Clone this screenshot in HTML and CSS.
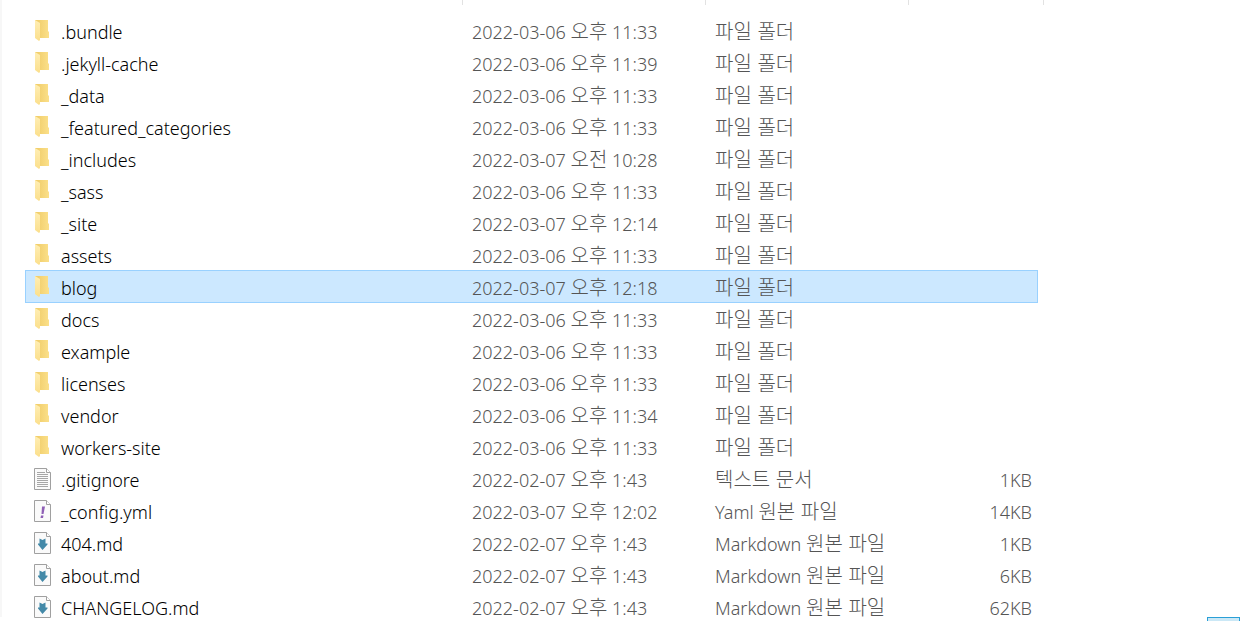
FILE: index.html
```html
<!DOCTYPE html>
<html lang="ko">
<head>
<meta charset="utf-8">
<title>blog</title>
<link rel="stylesheet" href="styles.css">
</head>
<body>
<svg class="defs" aria-hidden="true">
  <defs>
    <linearGradient id="back" x1="0" x2="1"><stop offset="0" stop-color="#efca65"/><stop offset="1" stop-color="#fbe08a"/></linearGradient>
    <linearGradient id="flap" x1="0" x2="0" y1="0" y2="1"><stop offset="0" stop-color="#ffeeb4"/><stop offset="1" stop-color="#fbdf8c"/></linearGradient>
  </defs>
  <symbol id="folder" viewBox="0 0 18 22">
    <path d="M1 0H14V11L15 12V18H1Z" fill="url(#back)"/>
    <path d="M1 0L6 3V20L5 21L1 18Z" fill="url(#flap)"/>
  </symbol>
  <symbol id="page" viewBox="0 0 18 22">
    <path d="M.5 .5H12.5L16.500 4.500V21.500H.5Z" fill="#fafafa" stroke="#a0a0a0"/>
    <path d="M12.500 .5V4.500H16.500" fill="#fff" stroke="#a0a0a0"/>
  </symbol>
  <symbol id="text" viewBox="0 0 18 22">
    <use href="#page"/>
    <path d="M3 4.500H11M3 6.500H14M3 8.500H14M3 10.500H14M3 12.500H14M3 14.500H14M3 16.500H14M3 18.500H14" stroke="#a6a6a6"/>
  </symbol>
  <symbol id="yaml" viewBox="0 0 18 22">
    <use href="#page"/>
    <path d="M8 6.500H11L9.500 14H7.500ZM7 15.500H9.500L9 18H6.500Z" fill="#8e5fb5"/>
  </symbol>
  <symbol id="markdown" viewBox="0 0 18 22">
    <use href="#page"/>
    <path d="M5.500 6.500L8.500 8L11.500 6.500V11.500H13.500V12.500L8.500 18L4 12.500V11.500H5.500Z" fill="#4389a8"/>
  </symbol>
</svg>
<main class="explorer">
  <table class="files">
    <thead><tr class="columns"><th></th><th></th><th></th><th></th></tr></thead>
    <tbody>
      <tr class="row"><td class="name"><svg class="icon"><use href="#folder"/></svg>.bundle</td><td>2022-03-06 <span class="ko">오후</span> 11:33</td><td><span class="ko">파일 폴더</span></td><td class="size"></td></tr>
      <tr class="row"><td class="name"><svg class="icon"><use href="#folder"/></svg>.jekyll-cache</td><td>2022-03-06 <span class="ko">오후</span> 11:39</td><td><span class="ko">파일 폴더</span></td><td class="size"></td></tr>
      <tr class="row"><td class="name"><svg class="icon"><use href="#folder"/></svg>_data</td><td>2022-03-06 <span class="ko">오후</span> 11:33</td><td><span class="ko">파일 폴더</span></td><td class="size"></td></tr>
      <tr class="row"><td class="name"><svg class="icon"><use href="#folder"/></svg>_featured_categories</td><td>2022-03-06 <span class="ko">오후</span> 11:33</td><td><span class="ko">파일 폴더</span></td><td class="size"></td></tr>
      <tr class="row"><td class="name"><svg class="icon"><use href="#folder"/></svg>_includes</td><td>2022-03-07 <span class="ko">오전</span> 10:28</td><td><span class="ko">파일 폴더</span></td><td class="size"></td></tr>
      <tr class="row"><td class="name"><svg class="icon"><use href="#folder"/></svg>_sass</td><td>2022-03-06 <span class="ko">오후</span> 11:33</td><td><span class="ko">파일 폴더</span></td><td class="size"></td></tr>
      <tr class="row"><td class="name"><svg class="icon"><use href="#folder"/></svg>_site</td><td>2022-03-07 <span class="ko">오후</span> 12:14</td><td><span class="ko">파일 폴더</span></td><td class="size"></td></tr>
      <tr class="row"><td class="name"><svg class="icon"><use href="#folder"/></svg>assets</td><td>2022-03-06 <span class="ko">오후</span> 11:33</td><td><span class="ko">파일 폴더</span></td><td class="size"></td></tr>
      <tr class="row selected"><td class="name"><svg class="icon"><use href="#folder"/></svg>blog</td><td>2022-03-07 <span class="ko">오후</span> 12:18</td><td><span class="ko">파일 폴더</span></td><td class="size"></td></tr>
      <tr class="row"><td class="name"><svg class="icon"><use href="#folder"/></svg>docs</td><td>2022-03-06 <span class="ko">오후</span> 11:33</td><td><span class="ko">파일 폴더</span></td><td class="size"></td></tr>
      <tr class="row"><td class="name"><svg class="icon"><use href="#folder"/></svg>example</td><td>2022-03-06 <span class="ko">오후</span> 11:33</td><td><span class="ko">파일 폴더</span></td><td class="size"></td></tr>
      <tr class="row"><td class="name"><svg class="icon"><use href="#folder"/></svg>licenses</td><td>2022-03-06 <span class="ko">오후</span> 11:33</td><td><span class="ko">파일 폴더</span></td><td class="size"></td></tr>
      <tr class="row"><td class="name"><svg class="icon"><use href="#folder"/></svg>vendor</td><td>2022-03-06 <span class="ko">오후</span> 11:34</td><td><span class="ko">파일 폴더</span></td><td class="size"></td></tr>
      <tr class="row"><td class="name"><svg class="icon"><use href="#folder"/></svg>workers-site</td><td>2022-03-06 <span class="ko">오후</span> 11:33</td><td><span class="ko">파일 폴더</span></td><td class="size"></td></tr>
      <tr class="row"><td class="name"><svg class="icon"><use href="#text"/></svg>.gitignore</td><td>2022-02-07 <span class="ko">오후</span> 1:43</td><td><span class="ko">텍스트 문서</span></td><td class="size">1KB</td></tr>
      <tr class="row"><td class="name"><svg class="icon"><use href="#yaml"/></svg>_config.yml</td><td>2022-03-07 <span class="ko">오후</span> 12:02</td><td>Yaml <span class="ko">원본 파일</span></td><td class="size">14KB</td></tr>
      <tr class="row"><td class="name"><svg class="icon"><use href="#markdown"/></svg>404.md</td><td>2022-02-07 <span class="ko">오후</span> 1:43</td><td>Markdown <span class="ko">원본 파일</span></td><td class="size">1KB</td></tr>
      <tr class="row"><td class="name"><svg class="icon"><use href="#markdown"/></svg>about.md</td><td>2022-02-07 <span class="ko">오후</span> 1:43</td><td>Markdown <span class="ko">원본 파일</span></td><td class="size">6KB</td></tr>
      <tr class="row"><td class="name"><svg class="icon"><use href="#markdown"/></svg>CHANGELOG.md</td><td>2022-02-07 <span class="ko">오후</span> 1:43</td><td>Markdown <span class="ko">원본 파일</span></td><td class="size">62KB</td></tr>
    </tbody>
  </table>
</main>
<div class="view-toggle"></div>
</body>
</html>
```
FILE: styles.css
```css
* { box-sizing: border-box; }
body {
  margin: 0;
  height: 100vh;
  overflow: hidden;
  background: #fff;
  color: #555;
  font: 18px/32px "Noto Sans", "Noto Sans CJK KR", sans-serif;
}
.defs { position: absolute; width: 0; height: 0; }
.explorer {
  height: calc(100% - 4px);
  border-left: 2px solid #f7f7f7;
  padding: 0 197px 0 23px;
}
.files, .files thead, .files tbody { display: block; }
.columns {
  display: grid;
  grid-template-columns: 438fr 243fr 203fr 135fr;
  height: 5px;
  margin: 0 -1px 9px 0;
}
.columns th { padding: 0; border-right: 1px solid #e2e2e2; }
.row {
  display: grid;
  grid-template-columns: 437fr 243fr 203fr 130fr;
  height: 32px;
  margin-right: 5px;
  font-weight: 300;
}
.row td { padding: 2px 0 0 10px; white-space: nowrap; line-height: 32px; }
.row .name { display: flex; gap: 9px; padding-left: 9px; color: #000; }
.row .size { padding: 2px 6px 0 0; text-align: right; }
.ko { font-family: "Noto Sans CJK KR", sans-serif; font-size: 20px; line-height: 24px; }
.icon { flex: none; width: 18px; height: 22px; margin-top: 4px; }
.selected {
  height: 33px;
  margin-bottom: -1px;
  background: #cce8ff;
  outline: 1px solid #99d1ff;
  outline-offset: -1px;
}
.view-toggle {
  position: fixed;
  right: 0;
  bottom: 0;
  width: 33px;
  height: 4px;
  border: 1px solid #2a9fd6;
  border-bottom: 0;
  background: #cbe8f6;
}
```
